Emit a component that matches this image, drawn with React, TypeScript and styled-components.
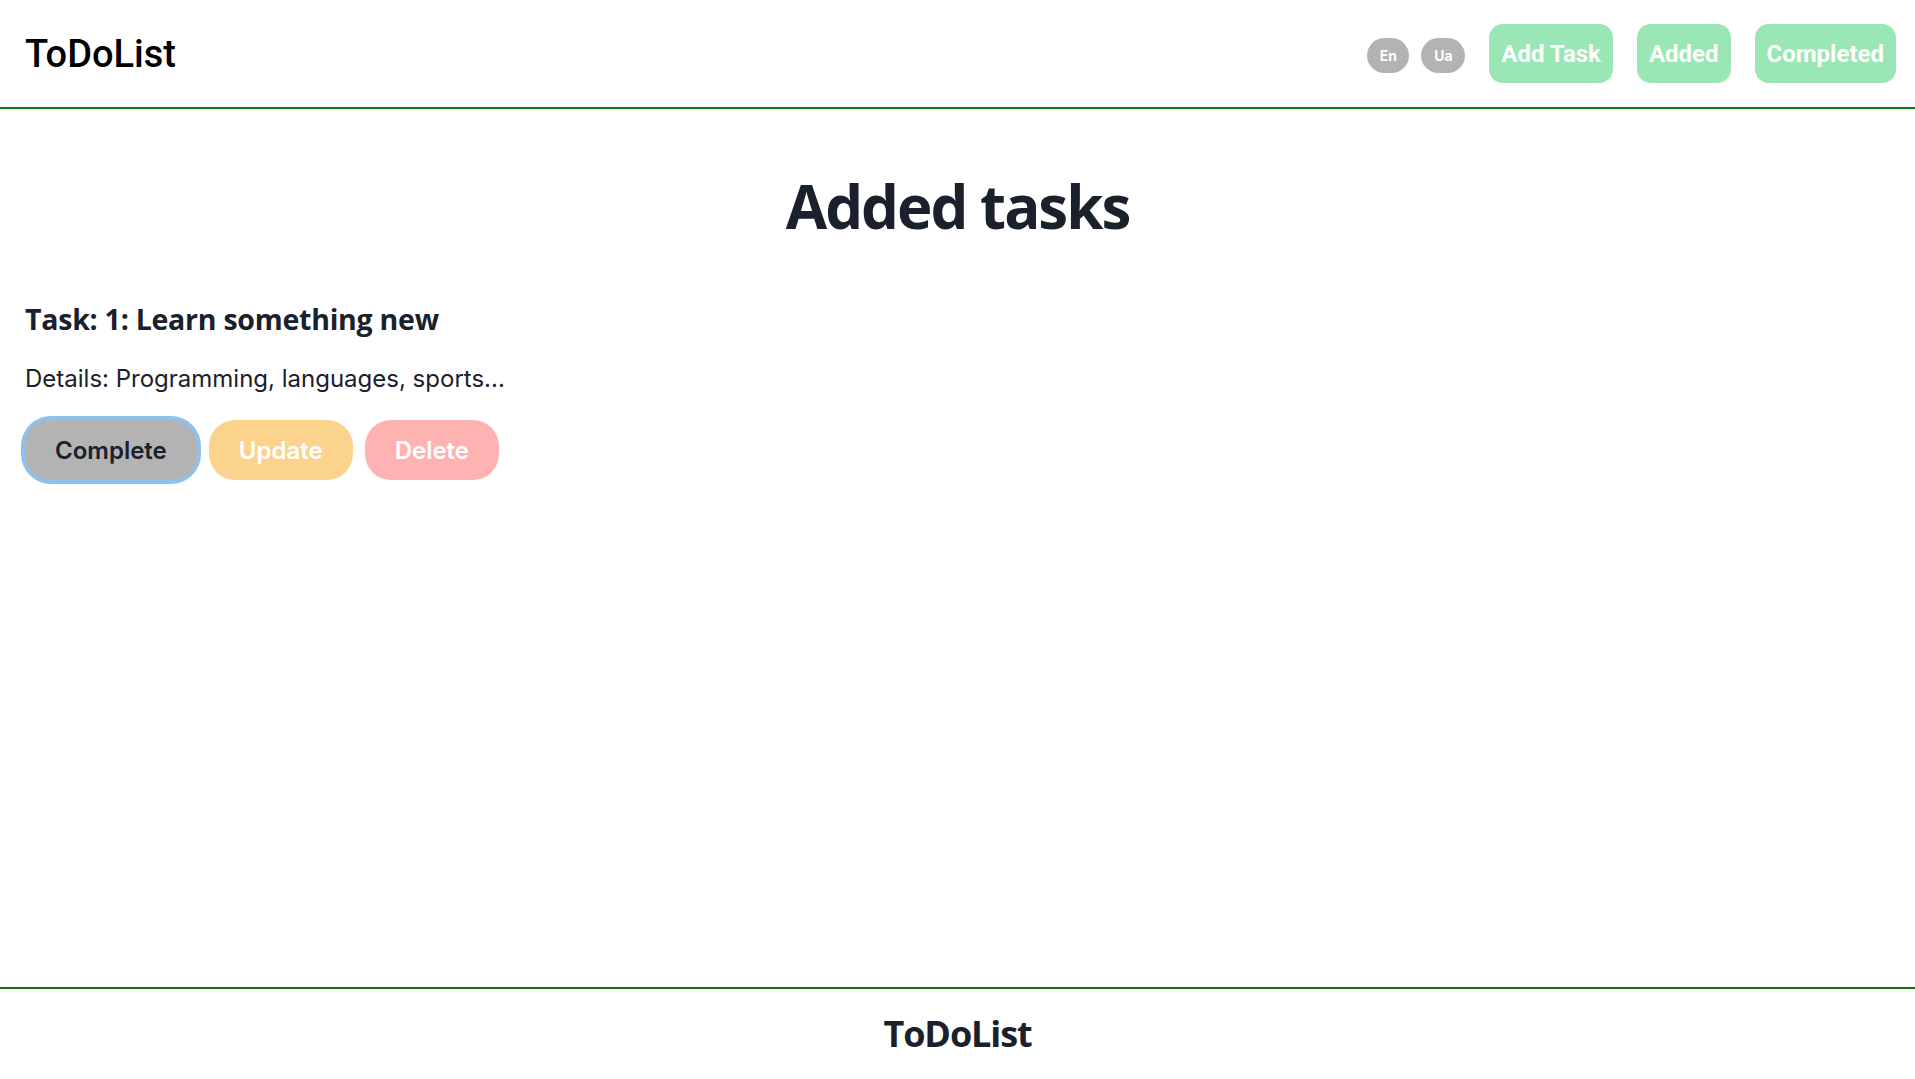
import React from "react";
import styled, { createGlobalStyle } from "styled-components";

const GlobalStyle = createGlobalStyle`
  html, body {
    margin: 0;
    padding: 0;
    background: #ffffff;
  }
  body {
    font-family: Inter, "Open Sans", sans-serif;
    color: #1a202c;
  }
  #root {
    min-height: 100vh;
    display: flex;
    flex-direction: column;
  }
`;

const Page = styled.div`
  flex: 1;
  display: flex;
  flex-direction: column;
  min-height: 100vh;
`;

const Header = styled.header`
  height: 107px;
  display: flex;
  align-items: center;
  justify-content: space-between;
  padding: 0 19px 0 25px;
  border-bottom: 2px solid #0a7d0a;
  box-sizing: content-box;
`;

const Logo = styled.div`
  font-family: Roboto, sans-serif;
  font-weight: 500;
  font-size: 38px;
  color: #000000;
`;

const Nav = styled.nav`
  display: flex;
  align-items: center;
  gap: 24px;
`;

const LangGroup = styled.div`
  display: flex;
  align-items: center;
  gap: 12px;
  margin-top: 4px;
`;

const LangButton = styled.button<{ $w: number }>`
  width: ${(p) => p.$w}px;
  height: 35px;
  border: none;
  border-radius: 18px;
  background: #b3b3b3;
  color: #ffffff;
  font-family: Inter, sans-serif;
  font-weight: 700;
  font-size: 14px;
  padding: 0;
  cursor: pointer;
`;

const NavButton = styled.button`
  height: 59px;
  padding: 0 12px;
  border: none;
  border-radius: 14px;
  background: #9ae6b4;
  color: #ffffff;
  font-family: Roboto, sans-serif;
  font-weight: 700;
  font-size: 24px;
  cursor: pointer;
`;

const Main = styled.main`
  flex: 1;
  padding: 0 25px;
`;

const Title = styled.h1`
  margin: 61px 0 0;
  text-align: center;
  font-family: "Open Sans", sans-serif;
  font-weight: 700;
  font-size: 60px;
  line-height: 72px;
  letter-spacing: -2px;
  color: #1a202c;
`;

const TaskCard = styled.section`
  margin-top: 59px;
  display: flex;
  flex-direction: column;
`;

const TaskTitle = styled.h2`
  margin: 0;
  font-family: "Open Sans", sans-serif;
  font-weight: 700;
  font-size: 28.5px;
  line-height: 36px;
  letter-spacing: -0.25px;
  color: #1a202c;
`;

const TaskDetails = styled.p`
  margin: 27px 0 0;
  font-family: Inter, sans-serif;
  font-size: 24px;
  line-height: 30px;
  color: #1a202c;
`;

const Actions = styled.div`
  display: flex;
  gap: 12px;
  margin-top: 26px;
`;

const ActionButton = styled.button<{ $bg: string; $fg: string; $focused?: boolean }>`
  height: 60px;
  padding: 0 30px;
  border: none;
  border-radius: 26px;
  background: ${(p) => p.$bg};
  color: ${(p) => p.$fg};
  font-family: Inter, sans-serif;
  font-weight: 600;
  font-size: 24px;
  cursor: pointer;
  box-shadow: ${(p) => (p.$focused ? "0 0 0 4px rgba(66, 153, 225, 0.6)" : "none")};
`;

const Footer = styled.footer`
  height: 90px;
  border-top: 2px solid #1a6e12;
  display: flex;
  align-items: center;
  justify-content: center;
`;

const FooterText = styled.div`
  font-family: "Open Sans", sans-serif;
  font-weight: 700;
  font-size: 36px;
  letter-spacing: -1.1px;
  color: #1a202c;
  margin-bottom: 2px;
`;

export default function App() {
  return (
    <>
      <GlobalStyle />
      <Page>
        <Header>
          <Logo>ToDoList</Logo>
          <Nav>
            <LangGroup>
              <LangButton $w={42}>En</LangButton>
              <LangButton $w={44}>Ua</LangButton>
            </LangGroup>
            <NavButton>Add Task</NavButton>
            <NavButton>Added</NavButton>
            <NavButton>Completed</NavButton>
          </Nav>
        </Header>
        <Main>
          <Title>Added tasks</Title>
          <TaskCard>
            <TaskTitle>Task: 1: Learn something new</TaskTitle>
            <TaskDetails>Details: Programming, languages, sports...</TaskDetails>
            <Actions>
              <ActionButton $bg="#b3b3b3" $fg="#1a202c" $focused>
                Complete
              </ActionButton>
              <ActionButton $bg="#fbd38d" $fg="#ffffff">
                Update
              </ActionButton>
              <ActionButton $bg="#feb2b2" $fg="#ffffff">
                Delete
              </ActionButton>
            </Actions>
          </TaskCard>
        </Main>
        <Footer>
          <FooterText>ToDoList</FooterText>
        </Footer>
      </Page>
    </>
  );
}
